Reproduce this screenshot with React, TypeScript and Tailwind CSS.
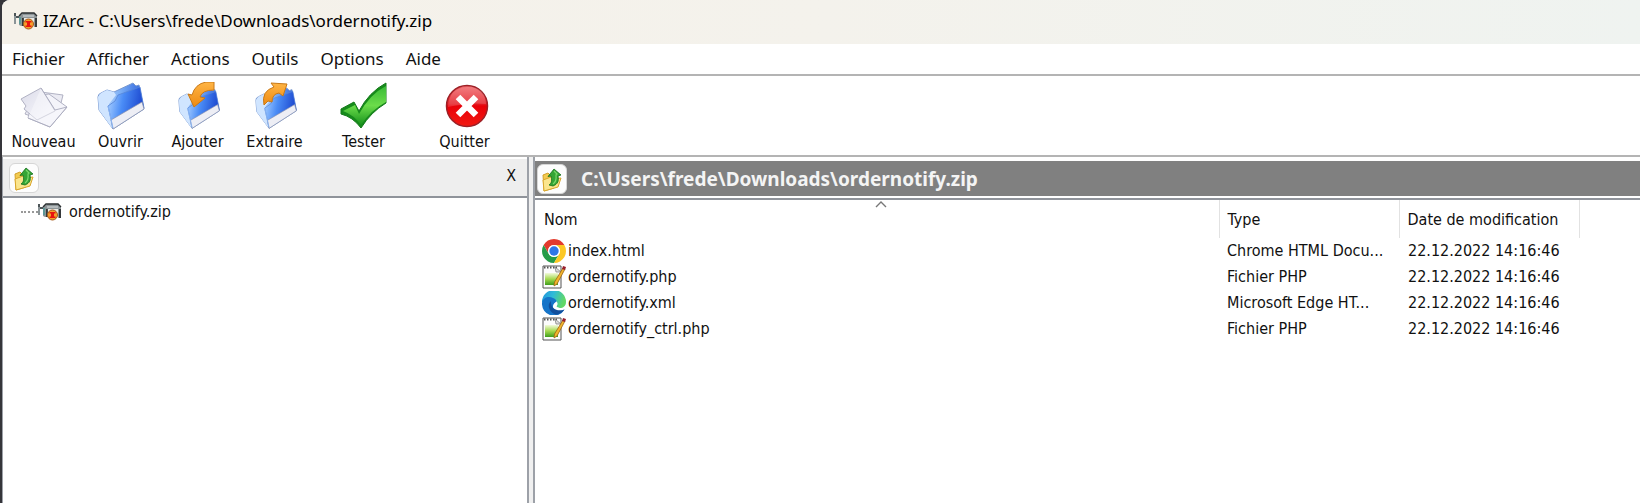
import type { ReactNode } from 'react';

interface ToolItem {
  label: string;
  icon: ReactNode;
  className?: string;
}

interface FileRow {
  name: string;
  kind: 'chrome' | 'php' | 'edge';
  type: string;
  date: string;
}

const MENUS = ['Fichier', 'Afficher', 'Actions', 'Outils', 'Options', 'Aide'];

const TOOLS: ToolItem[] = [
  { label: 'Nouveau', icon: <PapersIcon /> },
  { label: 'Ouvrir', icon: <FolderIcon /> },
  { label: 'Ajouter', icon: <FolderIcon arrow="in" /> },
  { label: 'Extraire', icon: <FolderIcon arrow="out" /> },
  { label: 'Tester', icon: <CheckIcon />, className: 'ml-3' },
  { label: 'Quitter', icon: <QuitIcon />, className: 'ml-6' },
];

const FILES: FileRow[] = [
  { name: 'index.html', kind: 'chrome', type: 'Chrome HTML Docu...', date: '22.12.2022 14:16:46' },
  { name: 'ordernotify.php', kind: 'php', type: 'Fichier PHP', date: '22.12.2022 14:16:46' },
  { name: 'ordernotify.xml', kind: 'edge', type: 'Microsoft Edge HT...', date: '22.12.2022 14:16:46' },
  { name: 'ordernotify_ctrl.php', kind: 'php', type: 'Fichier PHP', date: '22.12.2022 14:16:46' },
];

const FILE_ICONS = {
  chrome: <ChromeIcon />,
  php: <NotepadIcon />,
  edge: <EdgeIcon />,
};

export default function App() {
  return (
    <div className="min-h-screen bg-[#35353a] pl-[2px] font-['DejaVu_Sans_Condensed','DejaVu_Sans',sans-serif] text-[16px] text-[#111]">
      <div className="flex min-h-screen flex-col overflow-hidden rounded-tl-lg bg-white">
        {/* Title bar */}
        <header className="flex h-11 items-center gap-[5px] bg-linear-to-r from-[#f5f1e9] via-[#f4f2ec] to-[#eff3f0] pb-[2px] pl-3 font-['Noto_Sans',sans-serif]">
          <ArchiveIcon />
          <h1 className="text-[17px] leading-6 text-black">IZArc - C:\Users\frede\Downloads\ordernotify.zip</h1>
        </header>

        {/* Menu bar */}
        <nav className="flex h-[30px] items-center gap-[22px] pl-[10px] font-['Noto_Sans',sans-serif] text-[17px] leading-6">
          {MENUS.map((m) => (
            <button key={m} type="button">{m}</button>
          ))}
        </nav>

        {/* Toolbar */}
        <div className="flex h-[83px] items-start border-y-2 border-[#b4b4b4] pt-[6px] pl-[3px]">
          {TOOLS.map((t) => (
            <button key={t.label} type="button" className={`flex w-[77px] flex-col items-center ${t.className ?? ''}`}>
              {t.icon}
              <span className="leading-6">{t.label}</span>
            </button>
          ))}
        </div>

        <main className="flex grow">
          {/* Folder tree */}
          <aside className="flex w-[527px] shrink-0 flex-col border-r-2 border-l border-[#9da1a8]">
            <div className="mt-[2px] flex h-[39px] items-center justify-between border-b-2 border-[#8f939a] bg-[#eeeeee] pr-[11px] pl-[6px]">
              <UpButton />
              <button type="button" aria-label="Fermer" className="pb-[4px] leading-6">X</button>
            </div>
            <div className="flex items-center pt-[2px] pl-[18px]">
              <span className="w-[17px] border-t-2 border-dotted border-[#999]" />
              <ArchiveIcon />
              <span className="pl-[7px] leading-6">ordernotify.zip</span>
            </div>
          </aside>

          <div className="w-[4px] shrink-0 bg-[#f0f0f0]" />

          {/* Archive content */}
          <section className="flex min-w-0 grow flex-col border-l-2 border-[#9da1a8]">
            <div className="mt-[4px] flex h-[35px] items-center gap-[14px] bg-[#808080] pl-[2px]">
              <UpButton />
              <span className="font-['Noto_Sans',sans-serif] text-[19px] leading-6 font-bold text-[#f4f4f4]">
                C:\Users\frede\Downloads\ordernotify.zip
              </span>
            </div>
            <div className="mt-[2px] border-t-2 border-[#8f939a]">
              <table className="w-full table-fixed border-collapse text-left">
                <thead>
                  <tr className="h-[38px]">
                    <th className="border-r border-[#e2e2e2] p-0 pl-[9px] align-top font-normal">
                      <svg width="14" height="8" viewBox="0 0 14 8" className="mx-auto" aria-hidden="true">
                        <path d="M2 7 7 2l5 5" fill="none" stroke="#777" strokeWidth="1.4" />
                      </svg>
                      <div className="leading-6">Nom</div>
                    </th>
                    <th className="w-[180px] border-r border-[#e2e2e2] p-0 pt-[8px] pl-[8px] align-top leading-6 font-normal">Type</th>
                    <th className="w-[180px] border-r border-[#e2e2e2] p-0 pt-[8px] pl-[8px] align-top leading-6 font-normal">Date de modification</th>
                    <th className="w-[61px] p-0" />
                  </tr>
                </thead>
                <tbody>
                  {FILES.map((f) => (
                    <tr key={f.name} className="h-[26px]">
                      <td className="p-0 pl-[7px]">
                        <div className="flex items-center gap-[2px]">
                          {FILE_ICONS[f.kind]}
                          <span className="leading-6">{f.name}</span>
                        </div>
                      </td>
                      <td className="p-0 pl-[8px] whitespace-nowrap">{f.type}</td>
                      <td className="p-0 pl-[9px] whitespace-nowrap">{f.date}</td>
                      <td className="p-0" />
                    </tr>
                  ))}
                </tbody>
              </table>
            </div>
          </section>
        </main>
      </div>
    </div>
  );
}

function UpButton() {
  return (
    <button type="button" aria-label="Dossier parent" className="flex size-[30px] items-center justify-center rounded-md border border-[#d6d6d6] bg-[#fdfdfd]">
      <svg width="22" height="26" viewBox="0 0 22 26" aria-hidden="true">
        <path d="M2 9l5-2 2 2 4-1v14L3 25z" fill="#f3cb50" stroke="#d3a02a" />
        <path d="M2 14l8-3 2 2 8-1-3 9-14 4z" fill="#fbe58d" stroke="#d9a62c" />
        <path d="M13 3l7 6-3 1c1 5 0 8-5 10l-4-1c3-2 3-5 2-9l-3 .5z" fill="#35a535" stroke="#14701a" strokeWidth=".8" />
        <path d="M13 5l3 3-1 1c.5 4 0 7-3 9" fill="none" stroke="#7bd76b" strokeWidth="1.2" />
      </svg>
    </button>
  );
}

// Clamp around a red ball, shared by the title bar and the tree
function ArchiveIcon() {
  return (
    <svg width="24" height="18" viewBox="0 0 24 18" className="shrink-0" aria-hidden="true">
      <path d="M1 1v11" stroke="#8b9497" strokeWidth="2" />
      <path d="M0 1h2v3H0zM2 4h4v2H2z" fill="#4d5558" />
      <path d="M5 13V4l4-3h11l3 3v11h-3V6H9v8H7z" fill="#8d9598" />
      <path d="M5 4l3-3h12l3 3" fill="none" stroke="#2b2f31" strokeWidth="1.4" />
      <path d="M9 4h11" stroke="#c3c9ca" strokeWidth="1.4" />
      <path d="M6 5v7" stroke="#3b9a95" strokeWidth="1.2" />
      <path d="M9 6h11v8H9z" fill="#ecebe6" />
      <path d="M9 6v8M22 6v9" stroke="#202324" strokeWidth="1.6" />
      <circle cx="14.500" cy="12" r="5" fill="#f7a02c" stroke="#a5581a" />
      <path d="M11.500 9h6v1.500h-1.500v3h1.500V15h-6v-1.500H13v-3h-1.500z" fill="#e8140f" />
    </svg>
  );
}

function PapersIcon() {
  return (
    <svg width="48" height="48" viewBox="0 0 48 48" aria-hidden="true">
      <defs>
        <linearGradient id="sheet" x1="0" y1="0" x2="1" y2="1">
          <stop offset="0" stopColor="#dcdce9" />
          <stop offset="1" stopColor="#fbfbff" />
        </linearGradient>
      </defs>
      <g stroke="#a9aabd" strokeWidth=".9" strokeLinejoin="round">
        <path d="M21 10l22 3-2 8-17 18L5 32l3-6z" fill="#ebebf3" />
        <path d="M12 14l17-2 18 13-17 20-22-9 2-8z" fill="#f4f4fa" />
        <path d="M1 17l20-11 14 23-18 9-13-11 2-3z" fill="url(#sheet)" />
        <path d="M21 6l14 22 12-3-17 20-22-9" fill="#f8f8fc" fillOpacity=".5" />
      </g>
    </svg>
  );
}

function FolderIcon({ arrow }: { arrow?: 'in' | 'out' }) {
  return (
    <svg width="48" height="48" viewBox="0 0 48 48" aria-hidden="true">
      <defs>
        <linearGradient id="folder-back" x1="0" y1="0" x2="1" y2="0">
          <stop offset="0" stopColor="#cfe5ff" />
          <stop offset="0.5" stopColor="#79adf5" />
          <stop offset="1" stopColor="#2a5fdc" />
        </linearGradient>
        <linearGradient id="folder-front" x1="0" y1="0.3" x2="1" y2="0.5">
          <stop offset="0" stopColor="#a4ccff" />
          <stop offset="0.4" stopColor="#4a8cf6" />
          <stop offset="1" stopColor="#1740cb" />
        </linearGradient>
        <linearGradient id="orange" x1="0" y1="0" x2="0" y2="1">
          <stop offset="0" stopColor="#ffb545" />
          <stop offset="1" stopColor="#ee8a12" />
        </linearGradient>
      </defs>
      <g transform={arrow ? 'translate(4 5) scale(.88)' : undefined}>
        <path d="M1 15q0-3 3-4l6-3 7 2L36 1l3 3 3-1 5 24-31 20L2 28z" fill="url(#folder-back)" stroke="#7797cf" strokeLinejoin="round" />
        <path d="M1 15l3-4 6-3 7 2 2 3-7 9 3 24L2 28z" fill="#d0e5ff" />
        <path d="M11 24l7-5 3-6L43 5l4 21-31 20z" fill="url(#folder-front)" stroke="#5585d8" strokeWidth=".8" strokeLinejoin="round" />
        <path d="M14 38l31-18 2 7-31 20z" fill="#edeef5" stroke="#888fa9" strokeWidth=".7" />
        <path d="M11 24l5 22" stroke="#88b4f4" />
      </g>
      {arrow === 'in' && (
        <path d="M40 0H32Q21 2 18 13l-4-1 6 13 11-9-5-1q2-7 14-7z" fill="url(#orange)" stroke="#c87918" strokeLinejoin="round" />
      )}
      {arrow === 'out' && (
        <path d="M13 23Q10 9 23 5l-3-4 16 1-4 12-4-3q-7 1-7 9l-4-1z" fill="url(#orange)" stroke="#c87918" strokeLinejoin="round" />
      )}
    </svg>
  );
}

function CheckIcon() {
  return (
    <svg width="48" height="48" viewBox="0 0 48 48" aria-hidden="true">
      <defs>
        <linearGradient id="tick" x1="0" y1="0" x2="0" y2="1">
          <stop offset="0" stopColor="#39bb36" />
          <stop offset="0.5" stopColor="#6bdc4a" />
          <stop offset="1" stopColor="#18931c" />
        </linearGradient>
      </defs>
      <path d="M1 27l13-7 5 9Q29 10 46 1v20Q31 30 21 46 13 35 1 32z" fill="#168b1b" stroke="#157b1a" strokeLinejoin="round" />
      <path d="M3 29l12-6 4 9Q30 12 46 4v16Q31 28 21 43 14 33 3 29z" fill="url(#tick)" />
    </svg>
  );
}

function QuitIcon() {
  return (
    <svg width="48" height="48" viewBox="0 0 48 48" aria-hidden="true">
      <defs>
        <linearGradient id="quit" x1="0" y1="0" x2="0" y2="1">
          <stop offset="0" stopColor="#f0686c" />
          <stop offset="0.45" stopColor="#e31c24" />
          <stop offset="0.5" stopColor="#e80008" />
          <stop offset="1" stopColor="#f21a12" />
        </linearGradient>
      </defs>
      <circle cx="26" cy="24" r="20.500" fill="url(#quit)" stroke="#9c2026" strokeWidth="1.500" />
      <path d="M7 25Q8 6 26 5t19 17Q29 20 7 25z" fill="#fff" fillOpacity=".16" />
      <path d="M17 15l18 18M35 15L17 33" stroke="#fff" strokeWidth="6.500" />
    </svg>
  );
}

function ChromeIcon() {
  return (
    <svg width="24" height="24" viewBox="0 0 24 24" className="shrink-0" aria-hidden="true">
      <circle cx="12" cy="12" r="12" fill="#fff" />
      <path d="M12 0a12 12 0 0 1 10.390 6H12a6 6 0 0 0-5.200 9L1.610 6A12 12 0 0 1 12 0z" fill="#e33b2e" />
      <path d="M1.610 6l5.200 9A6 6 0 0 0 17.200 15L12 24A12 12 0 0 1 1.610 6z" fill="#269b48" />
      <path d="M22.390 6A12 12 0 0 1 12 24l5.200-9A6 6 0 0 0 12 6z" fill="#fcc824" />
      <circle cx="12" cy="12" r="6" fill="#fff" />
      <circle cx="12" cy="12" r="4.700" fill="#2f77e8" />
    </svg>
  );
}

function EdgeIcon() {
  return (
    <svg width="24" height="24" viewBox="0 0 24 24" className="shrink-0" aria-hidden="true">
      <defs>
        <linearGradient id="edge-top" x1="0" y1="0" x2="1" y2="0.3">
          <stop offset="0" stopColor="#2290dc" />
          <stop offset="0.5" stopColor="#2fbbd8" />
          <stop offset="1" stopColor="#62d867" />
        </linearGradient>
      </defs>
      <path d="M0 11A12 12 0 0 1 24 11c0 4-3 6-6 6-2 0-4-1-3.500-2 2-2 1-6-4-6C5 9 1 13 0 11z" fill="url(#edge-top)" />
      <path d="M0 12C1 6 7 5 11 7c4 1.500 4 4 3 5-4 0-5 8 3 8 2 0 4-.6 5.500-1.500A12 12 0 0 1 0 12z" fill="#1674c8" />
      <path d="M9 10c-5 4-1 12 5 13.800 3.500-.6 6.500-2.500 8.500-5.300C16 21 8 18 9 10z" fill="#124f9c" />
      <path d="M14.500 10.500c-2 1-3.500 3-2.500 5 1.500 2 5 2.500 8 1.500-3 0-6-.5-5.500-2 1-1 1-3 0-4.500z" fill="#fff" />
    </svg>
  );
}

function NotepadIcon() {
  return (
    <svg width="24" height="24" viewBox="0 0 24 24" className="shrink-0" aria-hidden="true">
      <defs>
        <linearGradient id="note" x1="0" y1="0" x2="0" y2="1">
          <stop offset="0" stopColor="#f2fadb" />
          <stop offset="0.5" stopColor="#a5d94f" />
          <stop offset="1" stopColor="#3f9e1c" />
        </linearGradient>
      </defs>
      <path d="M1 1h18v22H1z" fill="#fcfcfc" stroke="#555" />
      <path d="M2 2.500h13" stroke="#555" strokeWidth="2" strokeDasharray="1.500 1.500" />
      <path d="M13 2l6 5h-5z" fill="#ddd" stroke="#777" strokeWidth=".7" />
      <path d="M3 8h13v12H3z" fill="url(#note)" />
      <path d="M21 3l2 1-8 15-3 2 .5-4z" fill="#f2b42d" stroke="#9b6512" strokeWidth=".8" />
      <path d="M21 1l3 1-1 3-3-1z" fill="#971f2d" />
    </svg>
  );
}
